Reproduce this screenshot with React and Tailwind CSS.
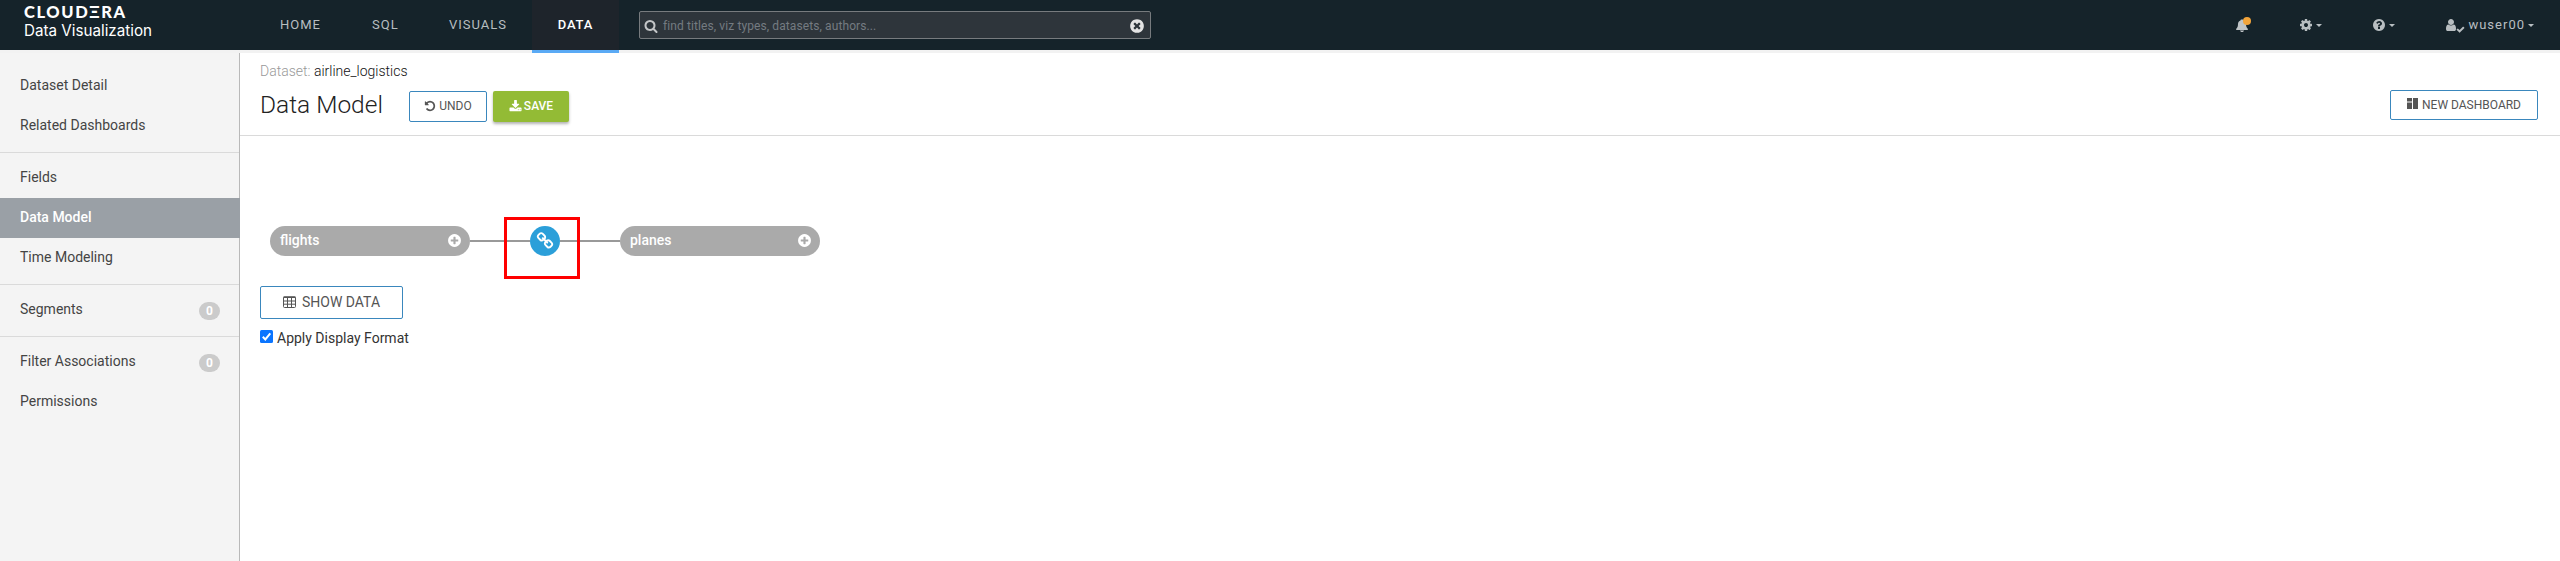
const CIRCLE = 'q0 209-103 385.5t-279.5 279.5-385.5 103-385.5-103-279.5-279.5-103-385.5 103-385.5 279.5-279.5 385.5-103 385.5 103 279.5 279.5 103 385.5z';

const PATHS = {
  chain: 'M1520 1216q0-40-28-68l-208-208q-28-28-68-28-42 0-72 32 3 3 19 18.5t21.5 21.5 15 19 13 25.5 3.5 27.5q0 40-28 68t-68 28q-15 0-27.5-3.5t-25.5-13-19-15-21.5-21.5-18.5-19q-33 31-33 73 0 40 28 68l206 207q27 27 68 27 40 0 68-26l147-146q28-28 28-67zm-703-705q0-40-28-68l-206-207q-28-28-68-28-39 0-68 27l-147 146q-28 28-28 67 0 40 28 68l208 208q27 27 68 27 42 0 72-31-3-3-19-18.5t-21.5-21.5-15-19-13-25.5-3.5-27.5q0-40 28-68t68-28q15 0 27.5 3.5t25.5 13 19 15 21.5 21.5 18.5 19q33-31 33-73zm895 705q0 120-85 203l-147 146q-83 83-203 83-121 0-204-85l-206-207q-83-83-83-203 0-123 88-209l-88-88q-86 88-208 88-120 0-204-84l-208-208q-84-84-84-204t85-203l147-146q83-83 203-83 121 0 204 85l206 207q83 83 83 203 0 123-88 209l88 88q86-88 208-88 120 0 204 84l208 208q84 84 84 204z',
  undo: 'M1664 896q0 156-61 298t-164 245-245 164-298 61q-172 0-327-72.5t-264-204.5q-7-10-6.5-22.5t8.5-20.5l137-138q10-9 25-9 16 2 23 12 73 95 179 147t225 52q104 0 198.5-40.5t163.5-109.5 109.5-163.5 40.5-198.5-40.5-198.5-109.5-163.5-163.5-109.5-198.5-40.5q-98 0-188 35.5t-160 101.5l137 138q31 30 14 69-17 40-59 40h-448q-26 0-45-19t-19-45v-448q0-42 40-59 39-17 69 14l130 129q107-101 244.5-156.5t284.5-55.5q156 0 298 61t245 164 164 245 61 298z',
  search: 'M1216 832q0-185-131.5-316.5t-316.5-131.5-316.5 131.5-131.5 316.5 131.5 316.5 316.5 131.5 316.5-131.5 131.5-316.5zm512 832q0 52-38 90t-90 38q-54 0-90-38l-343-342q-179 124-399 124-143 0-273.5-55.5t-225-150-150-225-55.5-273.5 55.5-273.5 150-225 225-150 273.5-55.5 273.5 55.5 225 150 150 225 55.5 273.5q0 220-124 399l343 343q37 37 37 90z',
  download: 'M1344 1344q0-26-19-45t-45-19-45 19-19 45 19 45 45 19 45-19 19-45zm256 0q0-26-19-45t-45-19-45 19-19 45 19 45 45 19 45-19 19-45zm128-224v320q0 40-28 68t-68 28h-1472q-40 0-68-28t-28-68v-320q0-40 28-68t68-28h465l135 136q58 56 136 56t136-56l136-136h464q40 0 68 28t28 68zm-325-569q17 41-14 70l-448 448q-18 19-45 19t-45-19l-448-448q-31-29-14-70 17-39 59-39h256v-448q0-26 19-45t45-19h256q26 0 45 19t19 45v448h256q42 0 59 39z',
  timesCircle: 'M1277 1122q0-26-19-45l-181-181 181-181q19-19 19-45 0-27-19-46l-90-90q-19-19-46-19-26 0-45 19l-181 181-181-181q-19-19-45-19-27 0-46 19l-90 90q-19 19-19 46 0 26 19 45l181 181-181 181q-19 19-19 45 0 27 19 46l90 90q19 19 46 19 26 0 45-19l181-181 181 181q19 19 45 19 27 0 46-19l90-90q19-19 19-46zm387-226' + CIRCLE,
  plusCircle: 'M1344 960v-128q0-26-19-45t-45-19h-256v-256q0-26-19-45t-45-19h-128q-26 0-45 19t-19 45v256h-256q-26 0-45 19t-19 45v128q0 26 19 45t45 19h256v256q0 26 19 45t45 19h128q26 0 45-19t19-45v-256h256q26 0 45-19t19-45zm320-64' + CIRCLE,
  questionCircle: 'M1024 1376v-192q0-14-9-23t-23-9h-192q-14 0-23 9t-9 23v192q0 14 9 23t23 9h192q14 0 23-9t9-23zm256-672q0-88-55.5-163t-138.5-116-170-41q-243 0-371 213-15 24 8 42l132 100q7 6 19 6 16 0 25-12 53-68 86-92 34-24 86-24 48 0 85.5 26t37.5 59q0 38-20 61t-68 45q-63 28-115.5 86.5t-52.5 125.5v36q0 14 9 23t23 9h192q14 0 23-9t9-23q0-19 21.5-49.5t54.5-49.5q32-18 49-28.5t46-35 44.5-48 28-60.5 12.5-81zm384 192' + CIRCLE,
  cog: 'M1152 896q0-106-75-181t-181-75-181 75-75 181 75 181 181 75 181-75 75-181zm512-109v222q0 12-8 23t-20 13l-185 28q-19 54-39 91 35 50 107 138 10 12 10 25t-9 23q-27 37-99 108t-94 71q-12 0-26-9l-138-108q-44 23-91 38-16 136-29 186-7 28-36 28h-222q-14 0-24.5-8.5t-11.5-21.5l-28-184q-49-16-90-37l-141 107q-10 9-25 9-14 0-25-11-126-114-165-168-7-10-7-23 0-12 8-23 15-21 51-66.5t54-70.5q-27-50-41-99l-183-27q-13-2-21-12.5t-8-23.5v-222q0-12 8-23t19-13l186-28q14-46 39-92-40-57-107-138-10-12-10-24 0-10 9-23 26-36 98.5-107.5t94.5-71.5q13 0 26 10l138 107q44-23 91-38 16-136 29-186 7-28 36-28h222q14 0 24.5 8.5t11.5 21.5l28 184q49 16 90 37l142-107q9-9 24-9 13 0 25 10 129 119 165 170 7 8 7 22 0 12-8 23-15 21-51 66.5t-54 70.5q26 50 41 98l183 28q13 2 21 12.5t8 23.5z',
  user: 'M1536 1399q0 109-62.5 187t-150.5 78h-854q-88 0-150.5-78t-62.5-187q0-85 8.5-160.5t31.5-152 58.5-131 94-89 134.5-34.5q131 128 313 128t313-128q76 0 134.5 34.5t94 89 58.5 131 31.5 152 8.5 160.5zm-256-887q0 159-112.5 271.5t-271.5 112.5-271.5-112.5-112.5-271.5 112.5-271.5 271.5-112.5 271.5 112.5 112.5 271.5z',
  check: 'M1671 566q0 40-28 68l-724 724-136 136q-28 28-68 28t-68-28l-136-136-362-362q-28-28-28-68t28-68l136-136q28-28 68-28t68 28l294 295 656-657q28-28 68-28t68 28l136 136q28 28 28 68z',
  bell: 'M896 1792q-110 0-180-70t-76-122h512q-6 52-76 122t-180 70zM1664 1408q0 52-38 90t-90 38H256q-52 0-90-38t-38-90q100-84 176-220t80-420q0-152 88-282t241-153q-9-22-9-45 0-40 28-68t68-28h192q40 0 68 28t28 68q0 23-9 45 153 23 241 153t88 282q4 284 80 420t176 220z',
};

function Icon({ name, className }) {
  return (
    <svg viewBox="0 0 1792 1792" fill="currentColor" className={`shrink-0 ${className}`}>
      <path d={PATHS[name]} />
    </svg>
  );
}

function Caret({ className }) {
  return (
    <svg viewBox="0 0 6 3" fill="currentColor" className={`h-[3px] w-[6px] shrink-0 ${className}`}>
      <path d="M0 0h6L3 3z" />
    </svg>
  );
}

function NavItem({ children, className }) {
  return <a className={`flex h-[50px] items-center text-[13px] ${className}`}>{children}</a>;
}

function Header() {
  return (
    <header className="flex h-[53px] shrink-0 items-start bg-[linear-gradient(to_bottom,#15232a_50px,#f2f2f2_50px)] text-[#b8bec1]">
      <div className="flex h-[50px] w-[254px] shrink-0 flex-col pl-[24px] pt-[4px] text-white">
        <div className="h-[17px] font-['Lato'] text-[16.5px] font-black leading-[17px] tracking-[1.6px]">CLOUDΞRA</div>
        <div className="h-[20px] whitespace-nowrap font-['Inter'] text-[15.2px] leading-[20px]">Data Visualization</div>
      </div>
      <NavItem className="w-[118px] pl-[26px] tracking-[1px]">HOME</NavItem>
      <NavItem className="w-[77px] tracking-[1px]">SQL</NavItem>
      <NavItem className="w-[83px] tracking-[1px]">VISUALS</NavItem>
      <NavItem className="box-content w-[87px] justify-center border-b-[3px] border-[#5aaaf5] bg-[#1e242b] font-medium tracking-[0.8px] text-white">DATA</NavItem>
      <div className="ml-[20px] mt-[11px] flex h-[28px] w-[512px] shrink-0 items-center rounded-[2px] border border-[#777b7e] bg-[#2e353b] pl-[4px] pr-[5px] pt-[2px]">
        <Icon name="search" className="size-[14px] text-[#c4c6c8]" />
        <span className="ml-[5px] flex-1 text-[12px] tracking-[0.1px] text-[#747b81]">find titles, viz types, datasets, authors...</span>
        <Icon name="timesCircle" className="size-[16px] text-[#e4e4e4]" />
      </div>
      <div className="flex h-[50px] flex-1 items-center justify-end pr-[26px]">
        <span className="relative mr-[50px]">
          <Icon name="bell" className="size-[14px] text-[#bfc4c7]" />
          <span className="absolute left-[8px] top-[-1px] size-[8px] rounded-full bg-[#f2a43a]" />
        </span>
        <Icon name="cog" className="size-[14px]" />
        <Caret className="ml-[3px] mr-[50px]" />
        <Icon name="questionCircle" className="size-[14px]" />
        <Caret className="ml-[3px] mr-[49px]" />
        <Icon name="user" className="size-[14px]" />
        <Icon name="check" className="-ml-[2px] mt-[9px] size-[9px]" />
        <span className="ml-[3px] text-[13px] tracking-[1px]">wuser00</span>
        <Caret className="ml-[3px]" />
      </div>
    </header>
  );
}

function SideItem({ label, count, active, className = 'pb-[2px]' }) {
  return (
    <a className={`flex h-[40px] items-center justify-between pl-[20px] pr-[19px] text-[14px] ${className} ${active ? 'mr-[-1px] bg-[#9aa0a6] font-medium text-white' : 'text-[#444]'}`}>
      {label}
      {count !== undefined && (
        <span className="mt-[3px] flex h-[18px] w-[21px] items-center justify-center rounded-full bg-[#cbcbcb] text-[12px] font-bold text-white">{count}</span>
      )}
    </a>
  );
}

function Sidebar() {
  return (
    <aside className="flex w-[240px] shrink-0 flex-col border-r border-[#b9b9b9] bg-[#f4f4f4] pt-[12px]">
      <SideItem label="Dataset Detail" className="pb-0" />
      <SideItem label="Related Dashboards" className="pb-0" />
      <div className="mb-[5px] mt-[7px] h-px bg-[#dadada]" />
      <SideItem label="Fields" />
      <SideItem label="Data Model" active />
      <SideItem label="Time Modeling" />
      <div className="mb-[5px] mt-[6px] h-px bg-[#dadada]" />
      <SideItem label="Segments" count={0} />
      <div className="mb-[5px] mt-[6px] h-px bg-[#dadada]" />
      <SideItem label="Filter Associations" count={0} />
      <SideItem label="Permissions" />
    </aside>
  );
}

function TableNode({ name }) {
  return (
    <div className="flex h-[30px] w-[200px] items-center justify-between rounded-full bg-[#aaa] pl-[10px] pr-[8px] text-[14px] font-medium text-white">
      <span className="-mt-[1px]">{name}</span>
      <Icon name="plusCircle" className="-mt-[2px] size-[15px]" />
    </div>
  );
}

function GridIcon() {
  return (
    <svg viewBox="0 0 13 12" className="h-[12px] w-[13px]" fill="none" stroke="currentColor">
      <rect x="0.5" y="1" width="12" height="10.5" rx="1" />
      <path d="M0.5 1.2h12" strokeWidth="1.6" />
      <path d="M4.5 1v10.5M8.5 1v10.5M0.5 5h12M0.5 8.2h12" />
    </svg>
  );
}

export default function App() {
  return (
    <div className="flex h-[561px] w-[2560px] flex-col overflow-hidden bg-white font-['Roboto',sans-serif] text-[14px]">
      <Header />
      <div className="flex flex-1">
        <Sidebar />
        <main className="flex flex-1 flex-col">
          <div className="flex h-[83px] shrink-0 items-start justify-between border-b border-[#dadada] pl-[20px] pr-[22px]">
            <div>
              <div className="mt-[9px] h-[18px] text-[14px] font-light leading-[18px] text-[#999]">
                Dataset: <span className="text-[#111]">airline_logistics</span>
              </div>
              <div className="mt-[7px] flex items-start">
                <h1 className="h-[36px] w-[149px] text-[24.5px] font-light leading-[36px] text-[#222]">Data Model</h1>
                <button className="mt-[4px] flex h-[31px] w-[78px] items-center justify-center rounded-[2px] border border-[#3a87bd] pb-[1px] text-[12px] text-[#555]">
                  <Icon name="undo" className="mr-[3px] size-[12px]" />
                  UNDO
                </button>
                <button className="ml-[6px] mt-[4px] flex h-[31px] w-[76px] items-center justify-center rounded-[2px] bg-[#93bb35] pb-[1px] text-[12px] font-medium text-white shadow-[0_2px_3px_rgba(0,0,0,0.3)]">
                  <Icon name="download" className="mr-[2px] size-[13px]" />
                  SAVE
                </button>
              </div>
            </div>
            <button className="mt-[37px] flex h-[30px] w-[148px] items-center justify-center rounded-[2px] border border-[#3a87bd] pb-[1px] text-[12px] text-[#555]">
              <svg viewBox="0 0 11 11" className="mb-[2px] mr-[4px] size-[11px]" fill="currentColor">
                <path d="M0 0h5v3.5H0zM0 4.5h5V11H0zM6 0h5v11H6z" />
              </svg>
              NEW DASHBOARD
            </button>
          </div>
          <div className="flex flex-col items-start pl-[20px] pt-[81px]">
            <div className="flex h-[62px] items-start pl-[10px]">
              <div className="mt-[9px]"><TableNode name="flights" /></div>
              <div className="mt-[23px] h-[2px] w-[34px] bg-[#999]" />
              <div className="flex h-[62px] w-[76px] items-start border-[3px] border-[#f00] pt-[6px]">
                <span className="mt-[14px] h-[2px] w-[23px] bg-[#999]" />
                <span className="flex size-[30px] shrink-0 items-center justify-center rounded-full bg-[#2b9fd9] text-white">
                  <Icon name="chain" className="size-[18px]" />
                </span>
                <span className="mt-[14px] h-[2px] flex-1 bg-[#999]" />
              </div>
              <div className="mt-[23px] h-[2px] w-[40px] bg-[#999]" />
              <div className="mt-[9px]"><TableNode name="planes" /></div>
            </div>
            <button className="mt-[7px] flex h-[33px] w-[143px] items-center justify-center rounded-[2px] border border-[#3a87bd] pb-[1px] text-[14px] text-[#555]">
              <span className="mr-[6px]"><GridIcon /></span>
              SHOW DATA
            </button>
            <label className="mt-[9px] flex h-[20px] items-center text-[14px] text-[#333]">
              <svg viewBox="0 0 13 13" className="mb-[3px] mr-[4px] size-[13px]">
                <rect width="13" height="13" rx="1.5" fill="#0b75ff" />
                <path d="M2.8 6.8l2.5 2.6 5-6" fill="none" stroke="#fff" strokeWidth="2" />
              </svg>
              Apply Display Format
            </label>
          </div>
        </main>
      </div>
    </div>
  );
}
